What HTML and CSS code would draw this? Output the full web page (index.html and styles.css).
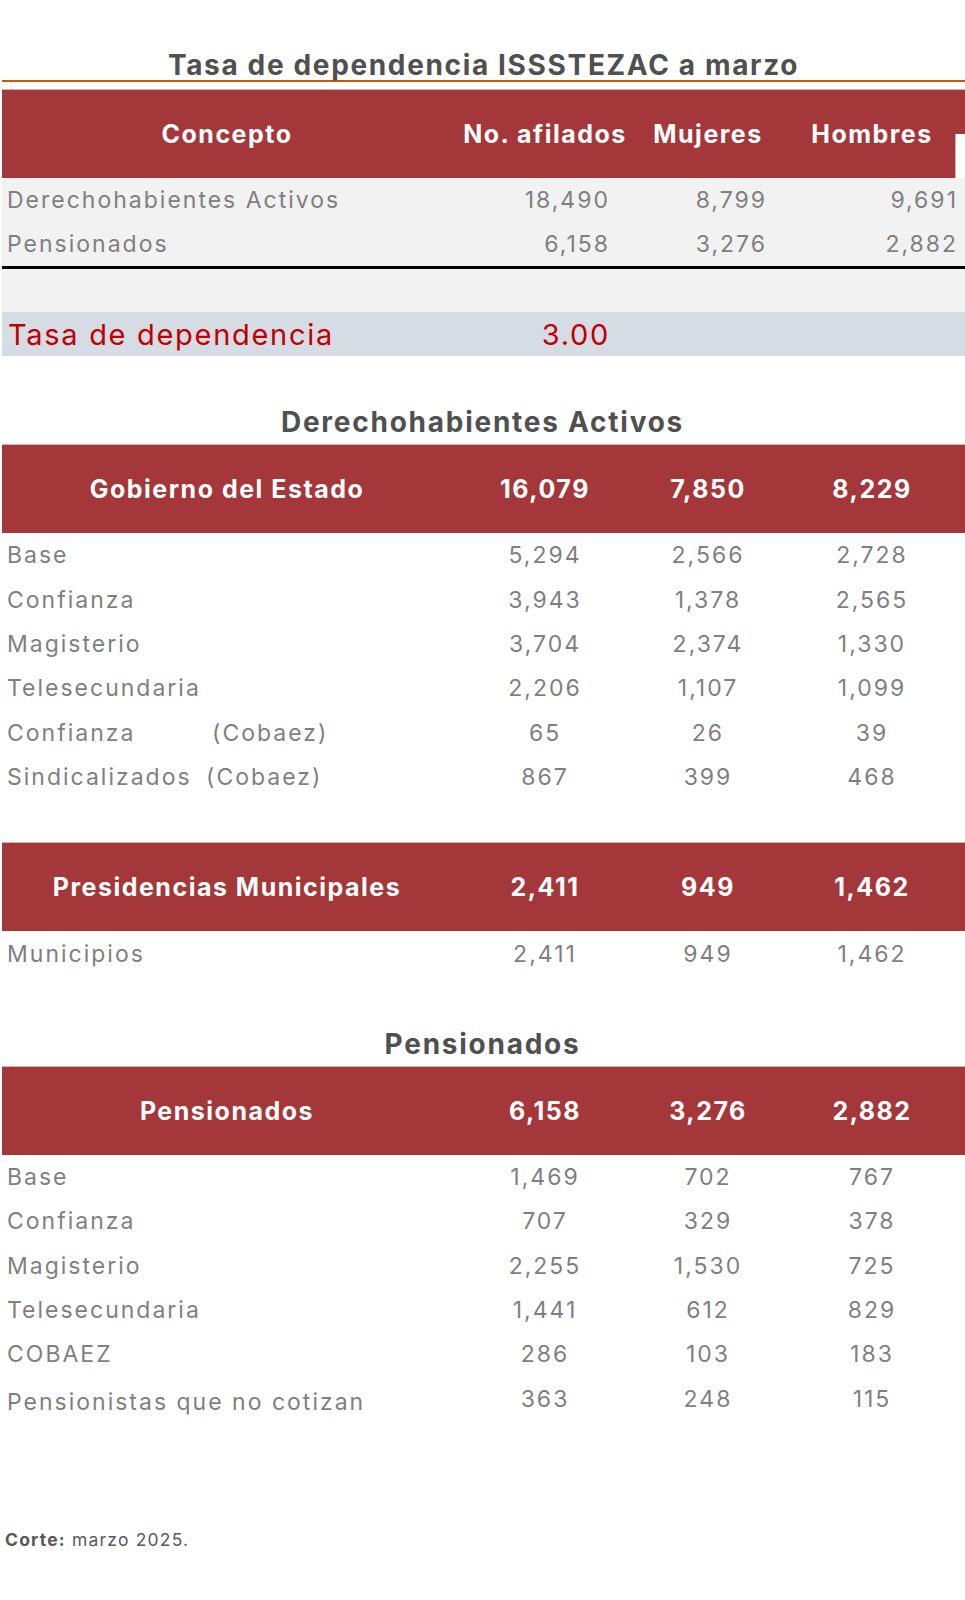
FILE: index.html
```html
<!DOCTYPE html>
<html lang="es">
<head>
<meta charset="utf-8">
<title>Tasa de dependencia ISSSTEZAC a marzo</title>
<link rel="stylesheet" href="styles.css">
</head>
<body>
<main class="page">
  <h1 class="title main-title">Tasa de dependencia ISSSTEZAC a marzo</h1>

  <section class="block">
    <div class="head head-first">
      <div class="c1">Concepto</div>
      <div class="cn">No. afilados</div>
      <div class="cn">Mujeres</div>
      <div class="cn">Hombres</div>
    </div>
    <div class="row gray right">
      <div class="c1">Derechohabientes Activos</div>
      <div class="cn n1">18,490</div>
      <div class="cn n2">8,799</div>
      <div class="cn n3">9,691</div>
    </div>
    <div class="row gray right">
      <div class="c1">Pensionados</div>
      <div class="cn n1">6,158</div>
      <div class="cn n2">3,276</div>
      <div class="cn n3">2,882</div>
    </div>
    <div class="rule"></div>
    <div class="row gray empty"></div>
    <div class="row rate right">
      <div class="c1">Tasa de dependencia</div>
      <div class="cn n1">3.00</div>
      <div class="cn"></div>
      <div class="cn"></div>
    </div>
  </section>

  <h2 class="title sec-title">Derechohabientes Activos</h2>
  <section class="block">
    <div class="head">
      <div class="c1">Gobierno del Estado</div>
      <div class="cn">16,079</div>
      <div class="cn">7,850</div>
      <div class="cn">8,229</div>
    </div>
    <div class="row"><div class="c1">Base</div><div class="cn">5,294</div><div class="cn">2,566</div><div class="cn">2,728</div></div>
    <div class="row"><div class="c1">Confianza</div><div class="cn">3,943</div><div class="cn">1,378</div><div class="cn">2,565</div></div>
    <div class="row"><div class="c1">Magisterio</div><div class="cn">3,704</div><div class="cn">2,374</div><div class="cn">1,330</div></div>
    <div class="row"><div class="c1">Telesecundaria</div><div class="cn">2,206</div><div class="cn">1,107</div><div class="cn">1,099</div></div>
    <div class="row"><div class="c1"><span class="lbl lbl-a">Confianza</span>(Cobaez)</div><div class="cn">65</div><div class="cn">26</div><div class="cn">39</div></div>
    <div class="row"><div class="c1"><span class="lbl lbl-b">Sindicalizados</span>(Cobaez)</div><div class="cn">867</div><div class="cn">399</div><div class="cn">468</div></div>
  </section>

  <section class="block block-mun">
    <div class="head">
      <div class="c1">Presidencias Municipales</div>
      <div class="cn">2,411</div>
      <div class="cn">949</div>
      <div class="cn">1,462</div>
    </div>
    <div class="row"><div class="c1">Municipios</div><div class="cn">2,411</div><div class="cn">949</div><div class="cn">1,462</div></div>
  </section>

  <h2 class="title sec-title sec-pens">Pensionados</h2>
  <section class="block">
    <div class="head">
      <div class="c1">Pensionados</div>
      <div class="cn">6,158</div>
      <div class="cn">3,276</div>
      <div class="cn">2,882</div>
    </div>
    <div class="row"><div class="c1">Base</div><div class="cn">1,469</div><div class="cn">702</div><div class="cn">767</div></div>
    <div class="row"><div class="c1">Confianza</div><div class="cn">707</div><div class="cn">329</div><div class="cn">378</div></div>
    <div class="row"><div class="c1">Magisterio</div><div class="cn">2,255</div><div class="cn">1,530</div><div class="cn">725</div></div>
    <div class="row"><div class="c1">Telesecundaria</div><div class="cn">1,441</div><div class="cn">612</div><div class="cn">829</div></div>
    <div class="row"><div class="c1">COBAEZ</div><div class="cn">286</div><div class="cn">103</div><div class="cn">183</div></div>
    <div class="row last"><div class="c1">Pensionistas que no cotizan</div><div class="cn">363</div><div class="cn">248</div><div class="cn">115</div></div>
  </section>

  <p class="note"><strong>Corte:</strong> marzo 2025.</p>
</main>
</body>
</html>
```

FILE: styles.css
```css
* { box-sizing: border-box; }

html, body {
  margin: 0;
  padding: 0;
  background: #ffffff;
}

body {
  font-family: Inter, "Open Sans", "Liberation Sans", sans-serif;
  color: #7f7f7f;
}

.page {
  width: 965px;
  padding: 0 0 40px 0;
}

.title {
  margin: 0;
  text-align: center;
  font-weight: 700;
  color: #505050;
  font-size: 28px;
  line-height: 30px;
  letter-spacing: 1.65px;
}

.main-title {
  padding-top: 50px;
  margin-left: 2px;
  border-bottom: 2px solid #c55a11;
  margin-bottom: 7px;
}

.sec-title {
  margin-top: 51px;
  margin-bottom: 6px;
  line-height: 31px;
  letter-spacing: 1.75px;
}

.sec-pens {
  margin-top: 53px;
}

.block {
  margin-left: 2px;
  width: 963px;
}

.block-mun {
  margin-top: 43px;
}

.head,
.row {
  display: grid;
  grid-template-columns: 460px 166px 160px 168px 9px;
  align-items: center;
}

.head {
  position: relative;
  height: 89px;
  background: #a4373a;
  color: #ffffff;
  font-weight: 700;
  font-size: 25px;
  letter-spacing: 1.5px;
  border-top: 1px solid #d9b3b4;
}

.head-first::after {
  content: "";
  position: absolute;
  right: -2px;
  top: 44px;
  width: 11px;
  height: 44px;
  background: #ffffff;
  border-left: 1px solid #b9b9b9;
}

.head .c1 {
  text-align: center;
  padding-right: 10px;
}

.cn {
  text-align: center;
}

.row {
  height: 44.4px;
  font-size: 23px;
  letter-spacing: 2px;
  color: #7f7f7f;
}

.row .c1 {
  padding-left: 5px;
  white-space: nowrap;
}

.row.gray {
  height: 44px;
  background: #f2f2f2;
}

.row.empty {
  height: 43px;
}

.right .n1 { text-align: right; padding-right: 18px; }
.right .n2 { text-align: right; padding-right: 21px; }
.right .n3 { text-align: right; padding-right: 4px; margin-right: -6px; }

.rule {
  height: 3px;
  background: #000000;
}

.row.rate {
  height: 44px;
  background: #d6dce4;
  color: #c00000;
  font-size: 29px;
  letter-spacing: 1.7px;
}

.row.rate .c1 {
  padding-left: 6px;
}

.row.rate .n1 {
  padding-right: 18px;
}

.lbl {
  display: inline-block;
}

.lbl-a { width: 205px; }
.lbl-b { width: 199px; }

.row.last .c1 {
  padding-top: 6px;
}

.note {
  margin: 107px 0 0 5px;
  font-size: 17.5px;
  line-height: 24px;
  color: #595959;
  letter-spacing: 1.2px;
}

.note strong {
  font-weight: 700;
}
```
